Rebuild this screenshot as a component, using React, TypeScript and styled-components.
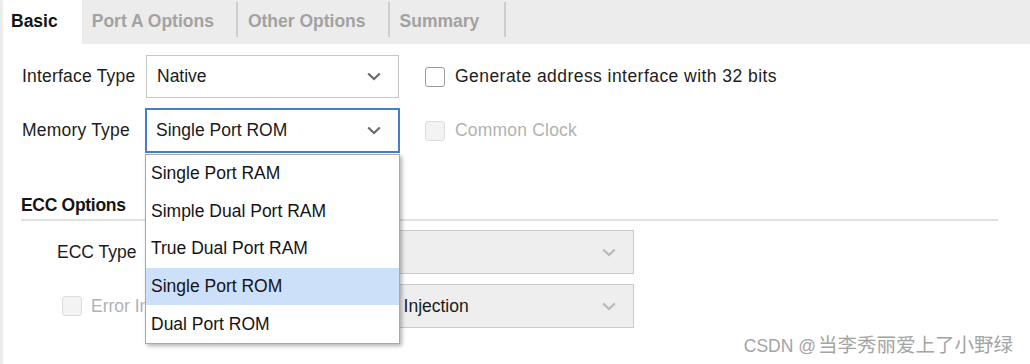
import React from "react";
import styled, { createGlobalStyle, css } from "styled-components";

const Global = createGlobalStyle`
  html, body { margin: 0; padding: 0; background: #ffffff; }
  body { font-family: "Liberation Sans", Arial, "Noto Sans CJK SC", sans-serif; }
  * { box-sizing: border-box; }
`;

const Root = styled.div`
  position: relative;
  width: 1030px;
  height: 364px;
  overflow: hidden;
  background: #ffffff;
`;

const TabBar = styled.div`
  display: flex;
  align-items: stretch;
  height: 44px;
  padding-left: 3px;
  background: #ececec;
`;

const Tab = styled.div<{ $active?: boolean; $padRight?: number }>`
  display: flex;
  align-items: center;
  padding: 0 ${(p) => p.$padRight ?? 22}px 2px 10px;
  font-size: 17.5px;
  font-weight: bold;
  color: #a2a2a2;
  white-space: nowrap;
  ${(p) =>
    p.$active &&
    css`
      background: #ffffff;
      color: #141414;
      padding: 0 24px 2px 8px;
    `}
`;

const TabSeparator = styled.div`
  width: 2px;
  margin: 2px 0 7px;
  background: #cdcdcd;
`;

const Body = styled.div`
  height: 320px;
  border-left: 3px solid #ececec;
  padding: 11px 0 0 19px;
`;

const FormGrid = styled.div`
  display: grid;
  grid-template-columns: 124px 253px auto;
  grid-auto-rows: 43px;
  row-gap: 11px;
  align-items: center;
`;

const Label = styled.div<{ $disabled?: boolean; $width?: number; $spacing?: number }>`
  font-size: 17.5px;
  color: ${(p) => (p.$disabled ? "#b2b2b2" : "#1c1c1c")};
  white-space: nowrap;
  letter-spacing: ${(p) => p.$spacing ?? 0}px;
  ${(p) => p.$width !== undefined && css`width: ${p.$width}px; flex: none;`}
`;

const SelectBox = styled.div<{ $focused?: boolean; $disabled?: boolean; $width?: number }>`
  display: flex;
  align-items: center;
  justify-content: space-between;
  height: 43px;
  padding: 0 17px 0 10px;
  border: 1px solid #c6c6c6;
  background: #ffffff;
  font-size: 17.5px;
  color: #1a1a1a;
  white-space: nowrap;
  overflow: hidden;
  ${(p) => p.$width !== undefined && css`width: ${p.$width}px; flex: none;`}
  ${(p) =>
    p.$focused &&
    css`
      border: 2px solid #4a7cc9;
      margin: -1px;
      height: 45px;
      padding: 0 17px 0 9px;
    `}
  ${(p) =>
    p.$disabled &&
    css`
      height: 44px;
      background: #eeeeee;
      border-color: #cacaca;
      padding-right: 17px;
    `}
`;

const CheckCell = styled.div`
  display: flex;
  align-items: center;
  padding-left: 26px;
`;

const CheckBox = styled.span<{ $disabled?: boolean }>`
  display: inline-block;
  flex: none;
  width: 20px;
  height: 20px;
  border-radius: 3px;
  border: 1px solid ${(p) => (p.$disabled ? "#dcdcdc" : "#9a9a9a")};
  background: ${(p) => (p.$disabled ? "#f3f3f3" : "#ffffff")};
  margin-right: 10px;
`;

const Section = styled.div`
  margin: 43px 0 0 -1px;
  width: 977px;
`;

const SectionTitle = styled.div`
  font-size: 17.5px;
  font-weight: bold;
  line-height: 20px;
  color: #141414;
  letter-spacing: -0.3px;
`;

const SectionRule = styled.div`
  height: 2px;
  margin-top: 4px;
  background: #e0e0e0;
`;

const SectionRows = styled.div`
  display: flex;
  flex-direction: column;
  gap: 10px;
  margin-top: 9px;
  padding-left: 36px;
`;

const Row = styled.div`
  display: flex;
  align-items: center;
`;

const CheckIndent = styled.div`
  display: flex;
  align-items: center;
  width: 213px;
  flex: none;
  padding-left: 5px;
  & > span { margin-right: 9px; }
`;

const Popup = styled.div`
  position: absolute;
  top: 154px;
  left: 145px;
  width: 255px;
  border: 1px solid #a9a9a9;
  background: #ffffff;
  box-shadow: 2px 2px 4px rgba(0, 0, 0, 0.3);
  z-index: 2;
`;

const Option = styled.div<{ $selected?: boolean }>`
  display: flex;
  align-items: center;
  height: 37.6px;
  padding-left: 5px;
  font-size: 17.5px;
  color: #141414;
  white-space: nowrap;
  background: ${(p) => (p.$selected ? "#cde0f9" : "transparent")};
`;

const Watermark = styled.div`
  position: absolute;
  right: 17px;
  bottom: 8px;
  font-size: 17.5px;
  line-height: 20px;
  color: #a4a4a4;
  white-space: nowrap;
  text-shadow: 0 0 2px #ffffff;
`;

const Cjk = styled.span`
  font-family: "Noto Sans CJK SC", sans-serif;
  font-size: 19.5px;
  margin-left: 2px;
`;

const Chevron: React.FC<{ disabled?: boolean }> = ({ disabled }) => (
  <svg width="14" height="9" viewBox="0 0 14 9" style={{ flex: "none" }}>
    <polyline
      points="1.2,1.5 7,7 12.8,1.5"
      fill="none"
      stroke={disabled ? "#b8b8b8" : "#6a6a6a"}
      strokeWidth="2.2"
    />
  </svg>
);

export default function App() {
  return (
    <Root>
      <Global />
      <TabBar>
        <Tab $active>Basic</Tab>
        <Tab>Port A Options</Tab>
        <TabSeparator />
        <Tab>Other Options</Tab>
        <TabSeparator />
        <Tab $padRight={25}>Summary</Tab>
        <TabSeparator />
      </TabBar>
      <Body>
        <FormGrid>
          <Label $spacing={0.2}>Interface Type</Label>
          <SelectBox>
            <span>Native</span>
            <Chevron />
          </SelectBox>
          <CheckCell>
            <CheckBox />
            <Label $spacing={0.45}>Generate address interface with 32 bits</Label>
          </CheckCell>

          <Label $spacing={0.2}>Memory Type</Label>
          <SelectBox $focused>
            <span>Single Port ROM</span>
            <Chevron />
          </SelectBox>
          <CheckCell>
            <CheckBox $disabled />
            <Label $disabled $spacing={0.2}>Common Clock</Label>
          </CheckCell>
        </FormGrid>

        <Section>
          <SectionTitle>ECC Options</SectionTitle>
          <SectionRule />
          <SectionRows>
            <Row>
              <Label $width={89}>ECC Type</Label>
              <SelectBox $disabled $width={488}>
                <span />
                <Chevron disabled />
              </SelectBox>
            </Row>
            <Row>
              <CheckIndent>
                <CheckBox $disabled />
                <Label $disabled>Error Injection Pins</Label>
              </CheckIndent>
              <SelectBox $disabled $width={364}>
                <span>Single Bit Error Injection</span>
                <Chevron disabled />
              </SelectBox>
            </Row>
          </SectionRows>
        </Section>
      </Body>

      <Popup>
        <Option>Single Port RAM</Option>
        <Option>Simple Dual Port RAM</Option>
        <Option>True Dual Port RAM</Option>
        <Option $selected>Single Port ROM</Option>
        <Option>Dual Port ROM</Option>
      </Popup>

      <Watermark>
        CSDN @<Cjk>当李秀丽爱上了小野绿</Cjk>
      </Watermark>
    </Root>
  );
}
